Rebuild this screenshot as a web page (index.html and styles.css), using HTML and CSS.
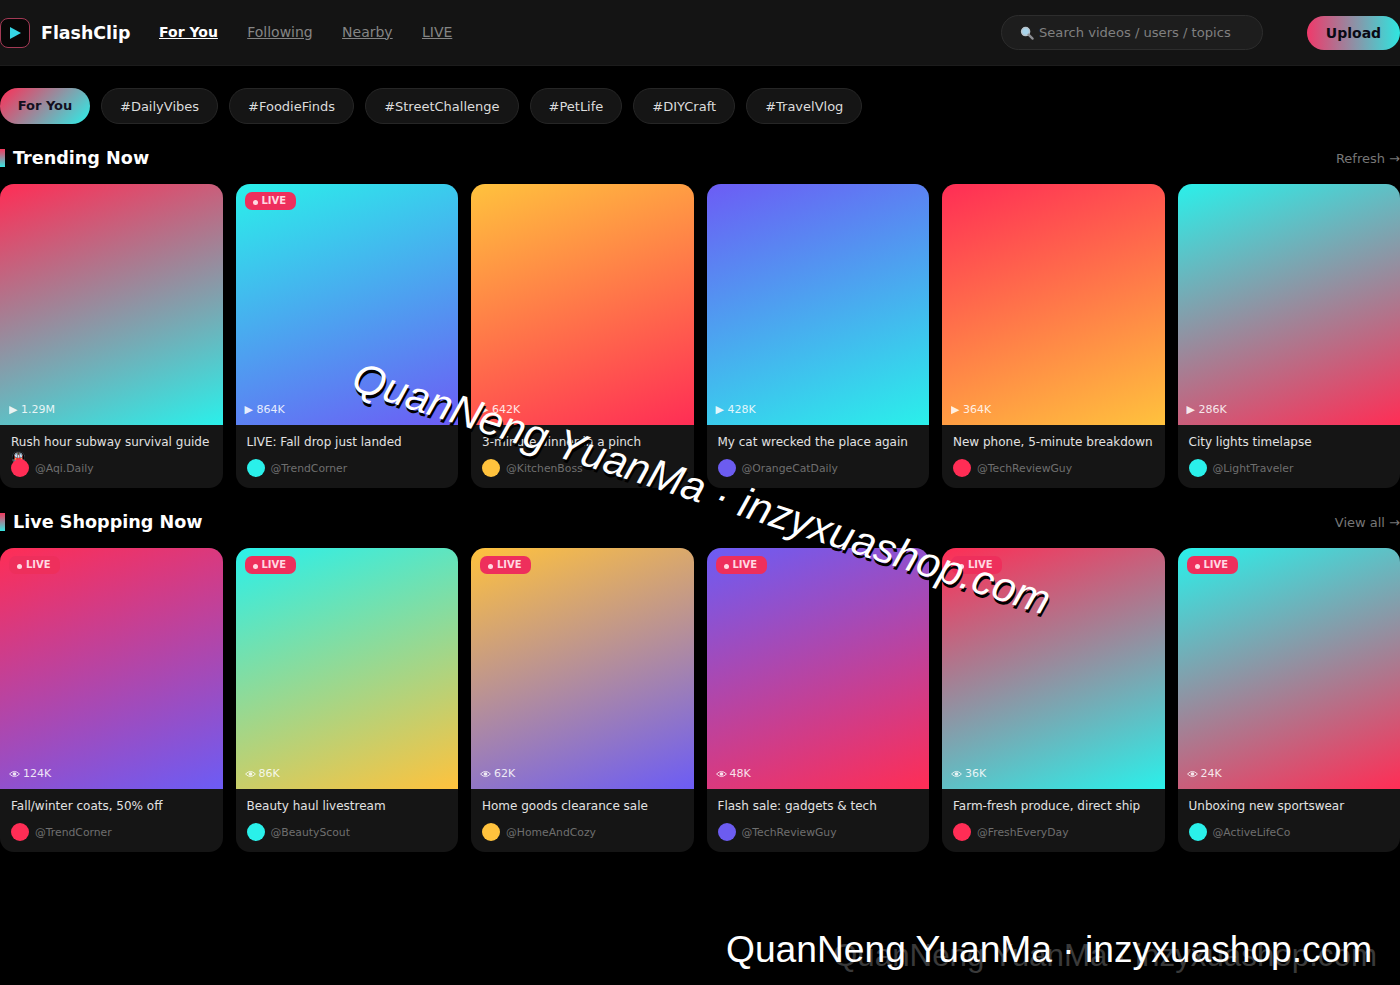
FILE: index.html
```html
<html>
  <head>
    <title>FlashClip</title>
    <meta name="viewport" content="width=device-width, initial-scale=1">
    <link rel="stylesheet" href="styles.css">
  </head>
  <body>
    <svg class="defs" width="0" height="0">
      <symbol id="eye" viewBox="0 0 12 8">
        <path d="M0.6 4 Q6 -1.6 11.4 4 Q6 9.6 0.6 4 Z" fill="none" stroke="currentColor" stroke-width="1"/>
        <circle cx="6" cy="4" r="2" fill="currentColor"/>
      </symbol>
    </svg>
    <header class="topbar">
      <div class="logo-box">
        <svg viewBox="0 0 11 12" width="11" height="12"><polygon points="0,0 11,6 0,12" fill="#35d6e6"/></svg>
      </div>
      <div class="logo-text">FlashClip</div>
      <nav class="nav">
        <a class="active" href="#">For You</a>
        <a href="#">Following</a>
        <a href="#">Nearby</a>
        <a href="#">LIVE</a>
      </nav>
      <div class="search">
        <svg class="search-icon" viewBox="0 0 14 14" width="14" height="14">
          <circle cx="5.6" cy="5.6" r="4" fill="#a9d4ea" stroke="#b9c4cc" stroke-width="1.5"/>
          <path d="M8.6 8.6 L12.6 12.6" stroke="#8d8f94" stroke-width="2.2" stroke-linecap="round"/>
        </svg>
        <span>Search videos / users / topics</span>
      </div>
      <button class="upload">Upload</button>
    </header>

    <div class="chips">
      <span class="chip chip-on">For You</span>
      <span class="chip">#DailyVibes</span>
      <span class="chip">#FoodieFinds</span>
      <span class="chip">#StreetChallenge</span>
      <span class="chip">#PetLife</span>
      <span class="chip">#DIYCraft</span>
      <span class="chip">#TravelVlog</span>
    </div>

    <section class="section">
      <div class="section-head">
        <h2>Trending Now</h2>
        <a href="#">Refresh →</a>
      </div>
      <div class="grid">
        <div class="card">
          <div class="thumb g-pink-teal"><span class="stat">▶ 1.29M</span></div>
          <div class="title">Rush hour subway survival guide 🚇</div>
          <div class="author"><i class="avatar pink"></i>@Aqi.Daily</div>
        </div>
        <div class="card">
          <div class="thumb g-teal-purple"><span class="live">LIVE</span><span class="stat">▶ 864K</span></div>
          <div class="title">LIVE: Fall drop just landed</div>
          <div class="author"><i class="avatar teal"></i>@TrendCorner</div>
        </div>
        <div class="card">
          <div class="thumb g-yellow-pink"><span class="stat">▶ 642K</span></div>
          <div class="title">3-minute dinner in a pinch</div>
          <div class="author"><i class="avatar yellow"></i>@KitchenBoss</div>
        </div>
        <div class="card">
          <div class="thumb g-purple-teal"><span class="stat">▶ 428K</span></div>
          <div class="title">My cat wrecked the place again</div>
          <div class="author"><i class="avatar purple"></i>@OrangeCatDaily</div>
        </div>
        <div class="card">
          <div class="thumb g-pink-yellow"><span class="stat">▶ 364K</span></div>
          <div class="title">New phone, 5-minute breakdown</div>
          <div class="author"><i class="avatar pink"></i>@TechReviewGuy</div>
        </div>
        <div class="card">
          <div class="thumb g-teal-pink"><span class="stat">▶ 286K</span></div>
          <div class="title">City lights timelapse</div>
          <div class="author"><i class="avatar teal"></i>@LightTraveler</div>
        </div>
      </div>
    </section>

    <section class="section">
      <div class="section-head">
        <h2>Live Shopping Now</h2>
        <a href="#">View all →</a>
      </div>
      <div class="grid">
        <div class="card">
          <div class="thumb g-pink-purple"><span class="live">LIVE</span><span class="stat"><svg class="eye"><use href="#eye"/></svg>124K</span></div>
          <div class="title">Fall/winter coats, 50% off</div>
          <div class="author"><i class="avatar pink"></i>@TrendCorner</div>
        </div>
        <div class="card">
          <div class="thumb g-teal-yellow"><span class="live">LIVE</span><span class="stat"><svg class="eye"><use href="#eye"/></svg>86K</span></div>
          <div class="title">Beauty haul livestream</div>
          <div class="author"><i class="avatar teal"></i>@BeautyScout</div>
        </div>
        <div class="card">
          <div class="thumb g-yellow-purple"><span class="live">LIVE</span><span class="stat"><svg class="eye"><use href="#eye"/></svg>62K</span></div>
          <div class="title">Home goods clearance sale</div>
          <div class="author"><i class="avatar yellow"></i>@HomeAndCozy</div>
        </div>
        <div class="card">
          <div class="thumb g-purple-pink"><span class="live">LIVE</span><span class="stat"><svg class="eye"><use href="#eye"/></svg>48K</span></div>
          <div class="title">Flash sale: gadgets &amp; tech</div>
          <div class="author"><i class="avatar purple"></i>@TechReviewGuy</div>
        </div>
        <div class="card">
          <div class="thumb g-pink-teal"><span class="live">LIVE</span><span class="stat"><svg class="eye"><use href="#eye"/></svg>36K</span></div>
          <div class="title">Farm-fresh produce, direct ship</div>
          <div class="author"><i class="avatar pink"></i>@FreshEveryDay</div>
        </div>
        <div class="card">
          <div class="thumb g-teal-pink"><span class="live">LIVE</span><span class="stat"><svg class="eye"><use href="#eye"/></svg>24K</span></div>
          <div class="title">Unboxing new sportswear</div>
          <div class="author"><i class="avatar teal"></i>@ActiveLifeCo</div>
        </div>
      </div>
    </section>

    <!-- Overlaid marks -->
    <div class="mark mark-diag">QuanNeng YuanMa · inzyxuashop.com</div>
    <div class="mark mark-faint">QuanNeng YuanMa · inzyxuashop.com</div>
    <div class="mark mark-bottom">QuanNeng YuanMa · inzyxuashop.com</div>
  </body>
</html>
```

FILE: styles.css
```css
body {
  margin: 0;
  padding: 0;
  height: 985px;
  background: #000;
  color: #fff;
  font-family: "DejaVu Sans", sans-serif;
  overflow: hidden;
  position: relative;
}
.defs {
  position: absolute;
}

/* Top bar */
.topbar {
  display: flex;
  align-items: center;
  height: 66px;
  background: #141414;
  border-bottom: 1px solid #1c1c1c;
  box-sizing: border-box;
}
.logo-box {
  width: 30px;
  height: 30px;
  box-sizing: border-box;
  border: 1px solid #a33a55;
  border-radius: 8px;
  background: #070707;
  display: flex;
  align-items: center;
  justify-content: center;
}
.logo-text {
  margin-left: 11px;
  font-size: 17.4px;
  font-weight: 700;
}
.nav {
  display: flex;
  gap: 29.3px;
  margin-left: 28.6px;
  padding-bottom: 2px;
  font-size: 14px;
}
.nav a {
  color: #858585;
}
.nav a.active {
  color: #fff;
  font-weight: 700;
}
.search {
  margin-left: auto;
  width: 262px;
  height: 35px;
  box-sizing: border-box;
  display: flex;
  align-items: center;
  gap: 5px;
  padding-left: 18px;
  background: #1d1d1d;
  border: 1px solid #2d2d2d;
  border-radius: 18px;
  font-size: 13.1px;
  color: #808080;
}
.upload {
  margin-left: 44px;
  width: 93px;
  height: 34px;
  border: 0;
  border-radius: 17px;
  background: linear-gradient(90deg, #f0396a, #2ee6e0);
  color: #0a0a14;
  font-family: inherit;
  font-size: 14px;
  font-weight: 700;
}

/* Chips */
.chips {
  display: flex;
  gap: 11px;
  padding-top: 22px;
}
.chip {
  height: 36px;
  box-sizing: border-box;
  display: flex;
  align-items: center;
  padding: 0 18px;
  background: #151515;
  border: 1px solid #262626;
  border-radius: 18px;
  font-size: 13px;
  color: #dcdcdc;
}
.chip-on {
  width: 90px;
  justify-content: center;
  padding: 0 0 2px;
  border: 0;
  background: linear-gradient(135deg, #ff2d55, #2af0ea);
  color: #14101f;
  font-weight: 700;
}

/* Sections */
.section {
  padding-top: 24px;
}
.section-head {
  display: flex;
  align-items: center;
  justify-content: space-between;
  height: 20px;
  margin-bottom: 16px;
}
.section-head h2 {
  margin: 0;
  padding-left: 8px;
  border-left: 5px solid;
  border-image: linear-gradient(180deg, #ff2d55, #2af0ea) 1;
  font-size: 17.6px;
  line-height: 18px;
}
.section-head a {
  font-size: 13px;
  color: #777;
  white-space: nowrap;
  text-decoration: none;
}
.grid {
  display: grid;
  grid-template-columns: repeat(6, 1fr);
  gap: 13px;
}
.card {
  height: 304px;
  background: #151515;
  border-radius: 14px;
  overflow: hidden;
}
.thumb {
  position: relative;
  height: 241px;
}
.stat {
  position: absolute;
  left: 9px;
  bottom: 8px;
  display: flex;
  align-items: center;
  gap: 3px;
  font-size: 11px;
  line-height: 14px;
  color: #fff;
  opacity: 0.85;
}
.eye {
  width: 11px;
  height: 8px;
}
.live {
  position: absolute;
  left: 9px;
  top: 8px;
  width: 51px;
  height: 18px;
  box-sizing: border-box;
  padding-left: 17px;
  background: #ee2f5c;
  border-radius: 7px;
  font-size: 10px;
  font-weight: 700;
  line-height: 17px;
  color: #ffd9e2;
}
.live::before {
  content: "";
  position: absolute;
  left: 8px;
  top: 8px;
  width: 5px;
  height: 5px;
  border-radius: 50%;
  background: #ffd9e2;
}
.title {
  height: 24px;
  padding: 9px 11px 0;
  font-size: 12px;
  line-height: 16px;
  color: #e2e2e2;
}
.author {
  position: relative;
  display: flex;
  align-items: center;
  gap: 6px;
  padding: 1px 11px 0;
  font-size: 10.8px;
  color: #6f6f6f;
}
.avatar {
  width: 18px;
  height: 18px;
  border-radius: 50%;
}
.pink { background: #ff2d55; }
.teal { background: #2af0ea; }
.yellow { background: #ffc23d; }
.purple { background: #6c5cf0; }

/* Thumbnail gradients */
.g-pink-teal { background: linear-gradient(160deg, #ff2d55, #2af0ea); }
.g-teal-purple { background: linear-gradient(160deg, #2af0ea, #6c5cf5); }
.g-yellow-pink { background: linear-gradient(160deg, #ffc23d, #ff2d55); }
.g-purple-teal { background: linear-gradient(160deg, #6c5cf5, #2af0ea); }
.g-pink-yellow { background: linear-gradient(160deg, #ff2d55, #ffc23d); }
.g-teal-pink { background: linear-gradient(160deg, #2af0ea, #ff2d55); }
.g-pink-purple { background: linear-gradient(160deg, #ff2d55, #6c5cf5); }
.g-teal-yellow { background: linear-gradient(160deg, #2af0ea, #ffc23d); }
.g-yellow-purple { background: linear-gradient(160deg, #ffc23d, #6c5cf5); }
.g-purple-pink { background: linear-gradient(160deg, #6c5cf5, #ff2d55); }

/* Overlaid marks */
.mark {
  position: absolute;
  white-space: nowrap;
  font-family: "Liberation Sans", sans-serif;
  pointer-events: none;
}
.mark-diag {
  left: 354px;
  top: 352px;
  font-size: 42px;
  font-style: italic;
  color: #fff;
  text-shadow: 2px 3px 0 #000;
  transform-origin: left center;
  transform: rotate(18deg);
}
.mark-bottom {
  left: 726px;
  top: 928px;
  font-size: 37.2px;
  color: #fff;
}
.mark-faint {
  left: 833px;
  top: 938px;
  font-size: 31.3px;
  color: #3a3a3a;
}
```
